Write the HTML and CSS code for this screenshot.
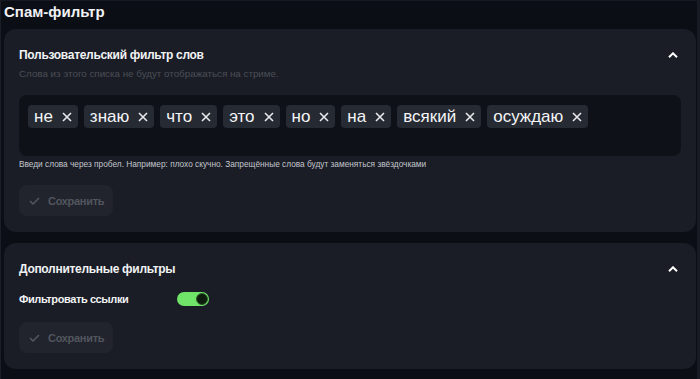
FILE: index.html
```html
<!DOCTYPE html>
<html lang="ru">
<head>
	<meta charset="utf-8">
	<title>Спам-фильтр</title>
	<link rel="stylesheet" href="styles.css">
</head>
<body>

<div class="page">
	<h1>Спам-фильтр</h1>

	<!-- Пользовательский фильтр -->
	<section class="card">
		<div class="card-head">
			<h2>Пользовательский фильтр слов</h2>
			<svg class="chevron" width="10" height="6" viewBox="0 0 10 6"><polyline points="1,5.2 5,1.3 9,5.2" /></svg>
		</div>
		<p class="hint">Слова из этого списка не будут отображаться на стриме.</p>

		<div class="tagbox">
			<span class="tag">не <svg class="x" width="10" height="10" viewBox="0 0 10 10"><path d="M1 1L9 9M9 1L1 9" /></svg></span>
			<span class="tag">знаю <svg class="x" width="10" height="10" viewBox="0 0 10 10"><path d="M1 1L9 9M9 1L1 9" /></svg></span>
			<span class="tag">что <svg class="x" width="10" height="10" viewBox="0 0 10 10"><path d="M1 1L9 9M9 1L1 9" /></svg></span>
			<span class="tag">это <svg class="x" width="10" height="10" viewBox="0 0 10 10"><path d="M1 1L9 9M9 1L1 9" /></svg></span>
			<span class="tag">но <svg class="x" width="10" height="10" viewBox="0 0 10 10"><path d="M1 1L9 9M9 1L1 9" /></svg></span>
			<span class="tag">на <svg class="x" width="10" height="10" viewBox="0 0 10 10"><path d="M1 1L9 9M9 1L1 9" /></svg></span>
			<span class="tag">всякий <svg class="x" width="10" height="10" viewBox="0 0 10 10"><path d="M1 1L9 9M9 1L1 9" /></svg></span>
			<span class="tag">осуждаю <svg class="x" width="10" height="10" viewBox="0 0 10 10"><path d="M1 1L9 9M9 1L1 9" /></svg></span>
		</div>
		<p class="help">Введи слова через пробел. Например: плохо скучно. Запрещённые слова будут заменяться звёздочками</p>

		<button class="save" disabled>
			<svg width="11" height="8" viewBox="0 0 11 8"><polyline points="1,4 4,7 10,1" /></svg>
			Сохранить
		</button>
	</section>

	<!-- Дополнительные фильтры -->
	<section class="card second">
		<div class="card-head">
			<h2>Дополнительные фильтры</h2>
			<svg class="chevron" width="10" height="6" viewBox="0 0 10 6"><polyline points="1,5.2 5,1.3 9,5.2" /></svg>
		</div>

		<div class="option">
			<span class="option-label">Фильтровать ссылки</span>
			<span class="switch on"><span class="knob"></span></span>
		</div>

		<button class="save" disabled>
			<svg width="11" height="8" viewBox="0 0 11 8"><polyline points="1,4 4,7 10,1" /></svg>
			Сохранить
		</button>
	</section>
</div>

</body>
</html>
```

FILE: styles.css
```css
html {
	background: #0b0e15;
}

body {
	margin: 0;
	height: 379px;
	box-sizing: border-box;
	border-top: 1px solid #161921;
	border-left: 1px solid #1b1e26;
	border-right: 3px solid #181b23;
	font-family: "Liberation Sans", Arial, sans-serif;
	color: #f1f2f4;
	background: #0b0e15;
}

.page {
	padding: 1px 1px 0 3px;
}

h1 {
	margin: 0;
	font-size: 15px;
	font-weight: 700;
	line-height: 20px;
}

.card {
	margin-top: 7px;
	background: #1a1d25;
	border-radius: 12px;
	padding: 16px 18px 16px 15px;
}

.card.second {
	margin-top: 11px;
}

.card-head {
	display: flex;
	align-items: center;
	justify-content: space-between;
}

h2 {
	margin: 0;
	font-size: 12px;
	font-weight: 700;
	line-height: 20px;
	letter-spacing: -0.3px;
}

.chevron polyline {
	fill: none;
	stroke: #fff;
	stroke-width: 2;
}

.hint {
	margin: 2px 0 0;
	font-size: 9.8px;
	line-height: 14px;
	color: #4a4e57;
}

.tagbox {
	margin: 14px -3px 0 0;
	height: 61px;
	box-sizing: border-box;
	background: #0e1118;
	border-radius: 8px;
	padding: 10px 9px;
	display: flex;
	align-items: flex-start;
	gap: 6px;
}

.tag {
	display: flex;
	align-items: center;
	gap: 9px;
	height: 23px;
	padding: 0 6px;
	background: #262a32;
	border-radius: 4px;
	font-size: 17px;
	color: #f4f5f7;
}

.x path {
	stroke: #e8e9ec;
	stroke-width: 1.6;
}

.help {
	margin: 2px 0 0;
	font-size: 8.3px;
	line-height: 12px;
	color: #c3c6cd;
}

.save {
	margin-top: 15px;
	display: flex;
	align-items: center;
	gap: 8px;
	height: 31px;
	padding: 0 9px 0 10px;
	border: 0;
	border-radius: 8px;
	background: #21242c;
	font-family: inherit;
	font-size: 11px;
	font-weight: 700;
	letter-spacing: -0.3px;
	color: #52565f;
}

.save polyline {
	fill: none;
	stroke: #52565f;
	stroke-width: 1.5;
}

.option {
	margin-top: 12px;
	display: flex;
	align-items: center;
}

.option-label {
	width: 158px;
	font-size: 11px;
	font-weight: 700;
	line-height: 16px;
	letter-spacing: -0.4px;
}

.card.second .save {
	margin-top: 15px;
}

.switch {
	width: 32px;
	height: 14px;
	border-radius: 8px;
	background: #3a3e46;
	display: flex;
	align-items: center;
	padding: 0 1px;
	box-sizing: border-box;
}

.switch.on {
	background: #6fe468;
	justify-content: flex-end;
}

.knob {
	width: 12px;
	height: 12px;
	border-radius: 50%;
	background: #0e1c0d;
	box-sizing: border-box;
	border: 1px solid #2d5a2a;
}
```
